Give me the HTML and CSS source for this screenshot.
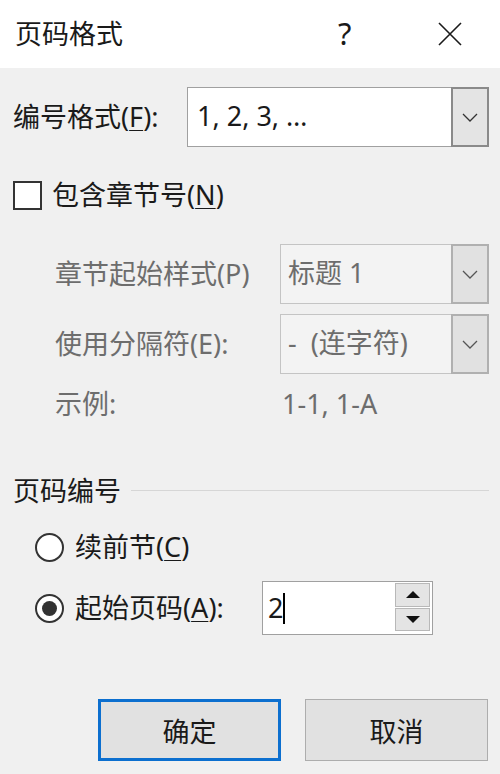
FILE: index.html
```html
<!DOCTYPE html>
<html lang="zh-CN">
<head>
<meta charset="utf-8">
<title>页码格式</title>
<link rel="stylesheet" href="styles.css">
</head>
<body>
<div class="dialog">
  <div class="titlebar">
    <span class="title">页码格式</span>
    <span class="help">?</span>
    <span class="close">
      <svg width="24" height="24" viewBox="0 0 24 24"><path d="M1 1 L23 23 M23 1 L1 23" stroke="#1a1a1a" stroke-width="1.6" fill="none"/></svg>
    </span>
  </div>
  <div class="main">
    <div class="row row-format">
      <span class="label lbl-format">编号格式(<u>F</u>):</span>
      <div class="combo">
        <span class="combo-text">1, 2, 3, …</span>
        <span class="combo-btn">
          <svg width="16" height="9" viewBox="0 0 16 9"><path d="M1 1 L8 8 L15 1" stroke="#333" stroke-width="1.3" fill="none"/></svg>
        </span>
      </div>
    </div>

    <div class="check-row">
      <span class="checkbox"></span>
      <span class="label">包含章节号(<u>N</u>)</span>
    </div>

    <div class="sub">
      <div class="row sub-row first">
        <span class="label dis sub-label">章节起始样式(P)</span>
        <div class="combo combo-dis">
          <span class="combo-text">标题 1</span>
          <span class="combo-btn">
            <svg width="16" height="9" viewBox="0 0 16 9"><path d="M1 1 L8 8 L15 1" stroke="#555" stroke-width="1.3" fill="none"/></svg>
          </span>
        </div>
      </div>
      <div class="row sub-row">
        <span class="label dis sub-label">使用分隔符(E):</span>
        <div class="combo combo-dis">
          <span class="combo-text">-&nbsp;&nbsp;(连字符)</span>
          <span class="combo-btn">
            <svg width="16" height="9" viewBox="0 0 16 9"><path d="M1 1 L8 8 L15 1" stroke="#555" stroke-width="1.3" fill="none"/></svg>
          </span>
        </div>
      </div>
      <div class="example-row">
        <span class="label dis sub-label">示例:</span>
        <span class="label dis example-val">1-1, 1-A</span>
      </div>
    </div>

    <div class="group-head">
      <span class="label">页码编号</span>
      <span class="group-line"></span>
    </div>

    <div class="radio-row r1">
      <span class="radio"></span>
      <span class="label">续前节(<u>C</u>)</span>
    </div>
    <div class="radio-row r2">
      <span class="radio checked"></span>
      <span class="label radio-label2">起始页码(<u>A</u>):</span>
      <div class="spinner">
        <div class="spin-field"><span class="spin-text">2</span><span class="caret"></span></div>
        <div class="spin-btns">
          <span class="spin-btn"><span class="tri-up"></span></span>
          <span class="spin-btn"><span class="tri-down"></span></span>
        </div>
      </div>
    </div>

    <div class="buttons">
      <button class="btn btn-default">确定</button>
      <button class="btn">取消</button>
    </div>
  </div>
</div>
</body>
</html>
```

FILE: styles.css
```css
* { box-sizing: border-box; }
html, body {
  margin: 0;
  padding: 0;
}
body {
  width: 500px;
  height: 774px;
  background: #f0f0f0;
  font-family: "Noto Sans", "Noto Sans CJK SC", sans-serif;
  color: #1a1a1a;
  overflow: hidden;
}
.dialog {
  width: 500px;
  height: 774px;
}
.titlebar {
  height: 68px;
  background: #ffffff;
  display: flex;
  align-items: center;
  padding-left: 15px;
}
.title {
  font-size: 27px;
  flex: 1;
  line-height: 30px;
  margin-top: -1px;
}
.help {
  font-size: 31px;
  width: 24px;
  margin-right: 76px;
  line-height: 30px;
  margin-top: -2px;
}
.close {
  width: 24px;
  height: 24px;
  margin-right: 38px;
  display: flex;
}
.main {
  padding: 19px 11px 0 13px;
}
.label {
  font-size: 27px;
  line-height: 30px;
  white-space: nowrap;
}
u { text-decoration-thickness: 1px; text-underline-offset: 3px; }
.row {
  display: flex;
  align-items: center;
  height: 60px;
}
.lbl-format {
  width: 174px;
}
.combo {
  flex: 1;
  height: 60px;
  display: flex;
  background: #ffffff;
  border: 1px solid #a0a0a0;
}
.combo-text {
  flex: 1;
  font-size: 27px;
  line-height: 56px;
  padding-left: 9px;
  white-space: nowrap;
}
.combo-btn {
  width: 38px;
  background: #e4e4e4;
  border: 2px solid #8a8a8a;
  margin: -1px -1px -1px 0;
  display: flex;
  align-items: center;
  justify-content: center;
}
.combo-dis {
  background: #f3f3f3;
  border-color: #c4c4c4;
}
.combo-dis .combo-text {
  color: #6d6d6d;
  padding-left: 7px;
}
.combo-dis .combo-btn {
  background: #e1e1e1;
  border-color: #b0b0b0;
}
.check-row {
  margin-top: 33px;
  height: 30px;
  display: flex;
  align-items: center;
}
.checkbox {
  width: 29px;
  height: 29px;
  border: 2px solid #333333;
  background: #ffffff;
  margin-right: 10px;
}
.sub {
  padding-left: 42px;
}
.sub-row.first {
  margin-top: 34px;
}
.sub-row {
  margin-top: 10px;
}
.sub-label {
  width: 225px;
}
.dis {
  color: #6d6d6d;
}
.example-row {
  margin-top: 15px;
  height: 30px;
  display: flex;
  align-items: center;
}
.example-val {
  padding-left: 2px;
}
.group-head {
  margin-top: 57px;
  height: 30px;
  display: flex;
  align-items: center;
}
.group-line {
  flex: 1;
  height: 1px;
  background: #d6d6d6;
  margin-left: 10px;
  margin-top: -2px;
}
.radio-row {
  display: flex;
  align-items: center;
  padding-left: 22px;
}
.r1 {
  margin-top: 26px;
  height: 30px;
}
.r2 {
  margin-top: 19px;
  height: 54px;
}
.radio {
  width: 29px;
  height: 29px;
  border: 2px solid #333333;
  border-radius: 50%;
  background: #ffffff;
  margin-right: 11px;
  display: flex;
  align-items: center;
  justify-content: center;
}
.radio.checked::after {
  content: "";
  width: 15px;
  height: 15px;
  border-radius: 50%;
  background: #333333;
}
.radio-label2 {
  width: 187px;
}
.spinner {
  width: 171px;
  height: 54px;
  border: 1px solid #a0a0a0;
  background: #ffffff;
  display: flex;
}
.spin-field {
  flex: 1;
  display: flex;
  align-items: center;
  padding-left: 5px;
}
.spin-text {
  font-size: 27px;
  line-height: 30px;
}
.caret {
  width: 2px;
  height: 31px;
  background: #000000;
  margin-left: 0px;
}
.spin-btns {
  width: 37px;
  display: flex;
  flex-direction: column;
  gap: 1px;
  padding: 1px 2px 3px 0;
}
.spin-btn {
  flex: 1;
  background: #e4e4e4;
  border: 1px solid #b8b8b8;
  display: flex;
  align-items: center;
  justify-content: center;
}
.tri-up {
  width: 0;
  height: 0;
  border-left: 7px solid transparent;
  border-right: 7px solid transparent;
  border-bottom: 7px solid #111111;
}
.tri-down {
  width: 0;
  height: 0;
  border-left: 7px solid transparent;
  border-right: 7px solid transparent;
  border-top: 7px solid #111111;
}
.buttons {
  margin-top: 64px;
  display: flex;
  padding-left: 85px;
  gap: 24px;
}
.btn {
  width: 183px;
  height: 62px;
  background: #e1e1e1;
  border: 1px solid #adadad;
  font-family: "Noto Sans", "Noto Sans CJK SC", sans-serif;
  font-size: 27px;
  color: #1a1a1a;
  padding: 0;
  margin: 0;
}
.btn-default {
  border: 3px solid #0c6fcf;
}
```
